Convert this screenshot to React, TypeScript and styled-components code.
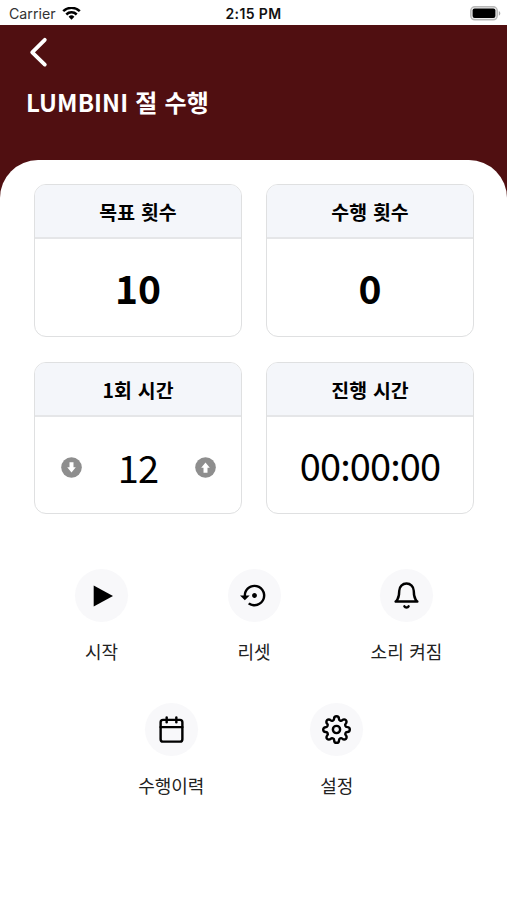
import React from "react";
import styled, { createGlobalStyle } from "styled-components";
import { FiBell, FiCalendar, FiSettings } from "react-icons/fi";
import { MdSettingsBackupRestore } from "react-icons/md";

const GlobalStyle = createGlobalStyle`
  * { box-sizing: border-box; }
  body {
    margin: 0;
    background: #fff;
    color: #000;
    font-family: "Noto Sans CJK KR", "Noto Sans", sans-serif;
  }
  button { border: 0; padding: 0; margin: 0; background: none; color: inherit; font: inherit; }
  svg { display: block; }
`;

const Screen = styled.div`
  width: 100%;
  height: 900px;
  display: flex;
  flex-direction: column;
  overflow: hidden;
  background: #500f11;
`;

const StatusBar = styled.div`
  flex: none;
  height: 25px;
  padding: 3px 6px 0 9px;
  display: grid;
  grid-template-columns: 1fr auto 1fr;
  align-items: center;
  background: #fff;
  font-family: Inter, sans-serif;
  font-size: 14px;
  line-height: 20px;
`;

const Carrier = styled.div`
  display: flex;
  align-items: center;
  gap: 6px;
  color: #333;
  font-size: 14.2px;
`;

const Clock = styled.div`
  color: #111;
  font-weight: 600;
  font-size: 14px;
  letter-spacing: 0.4px;
  margin-right: 3px;
`;

const Battery = styled.div`
  justify-self: end;
  margin-top: -2px;
`;

const Header = styled.header`
  flex: none;
  height: 135px;
  padding: 12px 26px 0;
  color: #fff;
`;

const BackButton = styled.button`
  display: block;
  width: 24px;
  height: 31px;
`;

const Title = styled.h1`
  margin: 16px 0 0;
  font-size: 24px;
  line-height: 36px;
  font-weight: 700;
  letter-spacing: 0.1px;
  word-spacing: 1.5px;
  white-space: nowrap;
`;

const Sheet = styled.main`
  flex: 1;
  padding: 24px 33px 0 34px;
  border-radius: 38px 38px 0 0;
  background: #fff;
`;

const Cards = styled.section`
  display: grid;
  grid-template-columns: 1fr 1fr;
  gap: 25px 24px;
`;

const Card = styled.article`
  height: 152.5px;
  display: flex;
  flex-direction: column;
  border: 1.5px solid #dfe0e1;
  border-radius: 12px;
  overflow: hidden;
`;

const CardTitle = styled.h2`
  flex: none;
  height: 54px;
  margin: 0;
  padding-top: 1px;
  display: flex;
  align-items: center;
  justify-content: center;
  border-bottom: 2px solid #e5e6e8;
  background: #f4f6fa;
  font-size: 19.4px;
  font-weight: 700;
  word-spacing: 1.6px;
`;

const CardBody = styled.div<{ $drop?: number }>`
  flex: 1;
  display: flex;
  align-items: center;
  justify-content: center;
  padding-top: ${(p) => p.$drop ?? 0}px;
`;

const Value = styled.span<{ $size: number; $bold?: boolean; $width?: number }>`
  width: ${(p) => (p.$width ? `${p.$width}px` : "auto")};
  text-align: center;
  font-size: ${(p) => p.$size}px;
  line-height: 58px;
  font-weight: ${(p) => (p.$bold ? 700 : 400)};
  letter-spacing: ${(p) => (p.$bold ? 0 : -0.9)}px;
`;

const Actions = styled.nav<{ $columns: number; $column: number; $top: number }>`
  display: grid;
  grid-template-columns: repeat(${(p) => p.$columns}, ${(p) => p.$column}px);
  justify-content: center;
  margin: ${(p) => p.$top}px 0 0;
`;

const Action = styled.button`
  display: flex;
  flex-direction: column;
  align-items: center;
  gap: 16px;
  color: #222;
  font-size: 18px;
  line-height: 26px;
  word-spacing: 1.5px;
  white-space: nowrap;
`;

const IconDisc = styled.span`
  width: 53px;
  height: 53px;
  display: flex;
  align-items: center;
  justify-content: center;
  border-radius: 50%;
  background: #f8f8fa;
  color: #000;
`;

const WifiIcon = () => (
  <svg width="19" height="14" viewBox="0 0 19 14" fill="none" stroke="#000" strokeWidth="2.5">
    <path d="M1.2 4.2a12 12 0 0 1 16.6 0" />
    <path d="M4.3 7.5a7.4 7.4 0 0 1 10.4 0" />
    <path d="M6.6 9.8a4.1 4.1 0 0 1 5.8 0L9.5 12.7z" fill="#000" stroke="none" />
  </svg>
);

const BatteryIcon = () => (
  <svg width="31" height="15" viewBox="0 0 31 15">
    <rect x="0.8" y="0.8" width="26.4" height="13" rx="4" fill="#eee" stroke="#b8b8b8" strokeWidth="1.5" />
    <rect x="2.6" y="2.6" width="22.8" height="9.4" rx="2" fill="#000" />
    <path d="M28.8 5c2 .8 2 3.900 0 4.700z" fill="#aaa" />
  </svg>
);

const BackIcon = () => (
  <svg width="24" height="31" viewBox="0 0 24 31" fill="none" stroke="#fff" strokeWidth="3.8" strokeLinecap="round" strokeLinejoin="round">
    <path d="M18.8 2.8 6.200 15.400l12.600 12.200" />
  </svg>
);

const StepIcon = ({ up = false }: { up?: boolean }) => (
  <svg width="21" height="21" viewBox="0 0 21 21">
    <circle cx="10.5" cy="10.5" r="10.3" fill="#8e8e8e" />
    <path
      d="M8.5 5.3h4v5h2.300l-4.300 5.200-4.300-5.200h2.300z"
      fill="#fff"
      transform={up ? "rotate(180 10.5 10.5)" : undefined}
    />
  </svg>
);

const PlayIcon = () => (
  <svg width="24" height="24" viewBox="0 0 24 24">
    <path d="M3.7 1.500 23 12 3.700 22.500z" fill="#000" />
  </svg>
);

export default function App() {
  return (
    <>
      <GlobalStyle />
      <Screen>
        <StatusBar>
          <Carrier>
            Carrier <WifiIcon />
          </Carrier>
          <Clock>2:15 PM</Clock>
          <Battery>
            <BatteryIcon />
          </Battery>
        </StatusBar>
        <Header>
          <BackButton aria-label="뒤로">
            <BackIcon />
          </BackButton>
          <Title>LUMBINI 절 수행</Title>
        </Header>
        <Sheet>
          <Cards>
            <Card>
              <CardTitle>목표 횟수</CardTitle>
              <CardBody>
                <Value $size={39} $bold>10</Value>
              </CardBody>
            </Card>
            <Card>
              <CardTitle>수행 횟수</CardTitle>
              <CardBody>
                <Value $size={39} $bold>0</Value>
              </CardBody>
            </Card>
            <Card>
              <CardTitle>1회 시간</CardTitle>
              <CardBody $drop={5}>
                <button aria-label="줄이기"><StepIcon /></button>
                <Value $size={38} $width={113}>12</Value>
                <button aria-label="늘리기"><StepIcon up /></button>
              </CardBody>
            </Card>
            <Card>
              <CardTitle>진행 시간</CardTitle>
              <CardBody>
                <Value $size={38}>00:00:00</Value>
              </CardBody>
            </Card>
          </Cards>
          <Actions $columns={3} $column={152.5} $top={55}>
            <Action>
              <IconDisc><PlayIcon /></IconDisc>
              시작
            </Action>
            <Action>
              <IconDisc><MdSettingsBackupRestore size={29} /></IconDisc>
              리셋
            </Action>
            <Action>
              <IconDisc><FiBell size={29} /></IconDisc>
              소리 켜짐
            </Action>
          </Actions>
          <Actions $columns={2} $column={165.5} $top={39}>
            <Action>
              <IconDisc><FiCalendar size={29} /></IconDisc>
              수행이력
            </Action>
            <Action>
              <IconDisc><FiSettings size={29} /></IconDisc>
              설정
            </Action>
          </Actions>
        </Sheet>
      </Screen>
    </>
  );
}
